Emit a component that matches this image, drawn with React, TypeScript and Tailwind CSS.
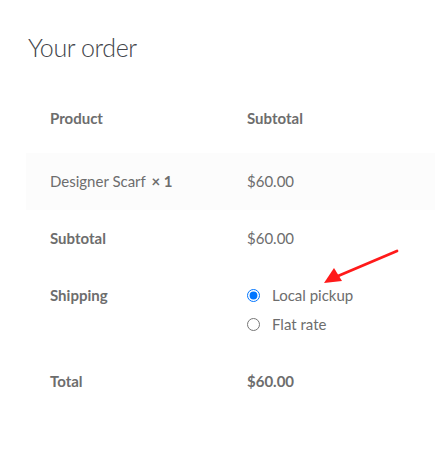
import React from "react";

export default function App() {
  const font = { fontFamily: '"Lato", "Open Sans", sans-serif' };
  return (
    <div className="w-[435px] h-[450px] bg-white overflow-hidden relative" style={font}>
      <h3 className="pl-[28px] pt-[32px] text-[25px] leading-[30px] font-light text-[#43454b] tracking-[-0.4px]">
        Your order
      </h3>
      <div className="ml-[26px] mt-[21px] w-[420px] text-[15px] leading-[21px] text-[#6d6d6d]">
        <div className="flex h-[70px] items-center font-bold">
          <div className="w-[197px] pl-[24px]">Product</div>
          <div className="pl-[24px]">Subtotal</div>
        </div>
        <div className="flex h-[57px] items-center bg-[#fcfcfc]">
          <div className="w-[197px] pl-[24px]">
            Designer Scarf <strong className="font-bold ml-[2px]">×&nbsp;1</strong>
          </div>
          <div className="pl-[24px]">$60.00</div>
        </div>
        <div className="flex h-[57px] items-center">
          <div className="w-[197px] pl-[24px] font-bold">Subtotal</div>
          <div className="pl-[24px]">$60.00</div>
        </div>
        <div className="flex py-[18px] items-start">
          <div className="w-[197px] pl-[24px] font-bold">Shipping</div>
          <div className="pl-[24px] flex flex-col gap-[8px]">
            <label className="flex items-center gap-[12px]">
              <input type="radio" name="ship" defaultChecked className="w-[13px] h-[13px] m-0 accent-[#0075ff]" />
              <span>Local pickup</span>
            </label>
            <label className="flex items-center gap-[12px]">
              <input type="radio" name="ship" className="w-[13px] h-[13px] m-0" />
              <span>Flat rate</span>
            </label>
          </div>
        </div>
        <div className="flex h-[57px] items-center font-bold">
          <div className="w-[197px] pl-[24px]">Total</div>
          <div className="pl-[24px]">$60.00</div>
        </div>
      </div>
      <svg className="absolute left-0 top-0 pointer-events-none" width="435" height="450">
        <line x1="397" y1="251" x2="338" y2="276" stroke="#ff1a1a" strokeWidth="2.8" strokeLinecap="round" />
        <polygon points="324,283 334,268 342,281" fill="#ff1a1a" />
      </svg>
    </div>
  );
}
